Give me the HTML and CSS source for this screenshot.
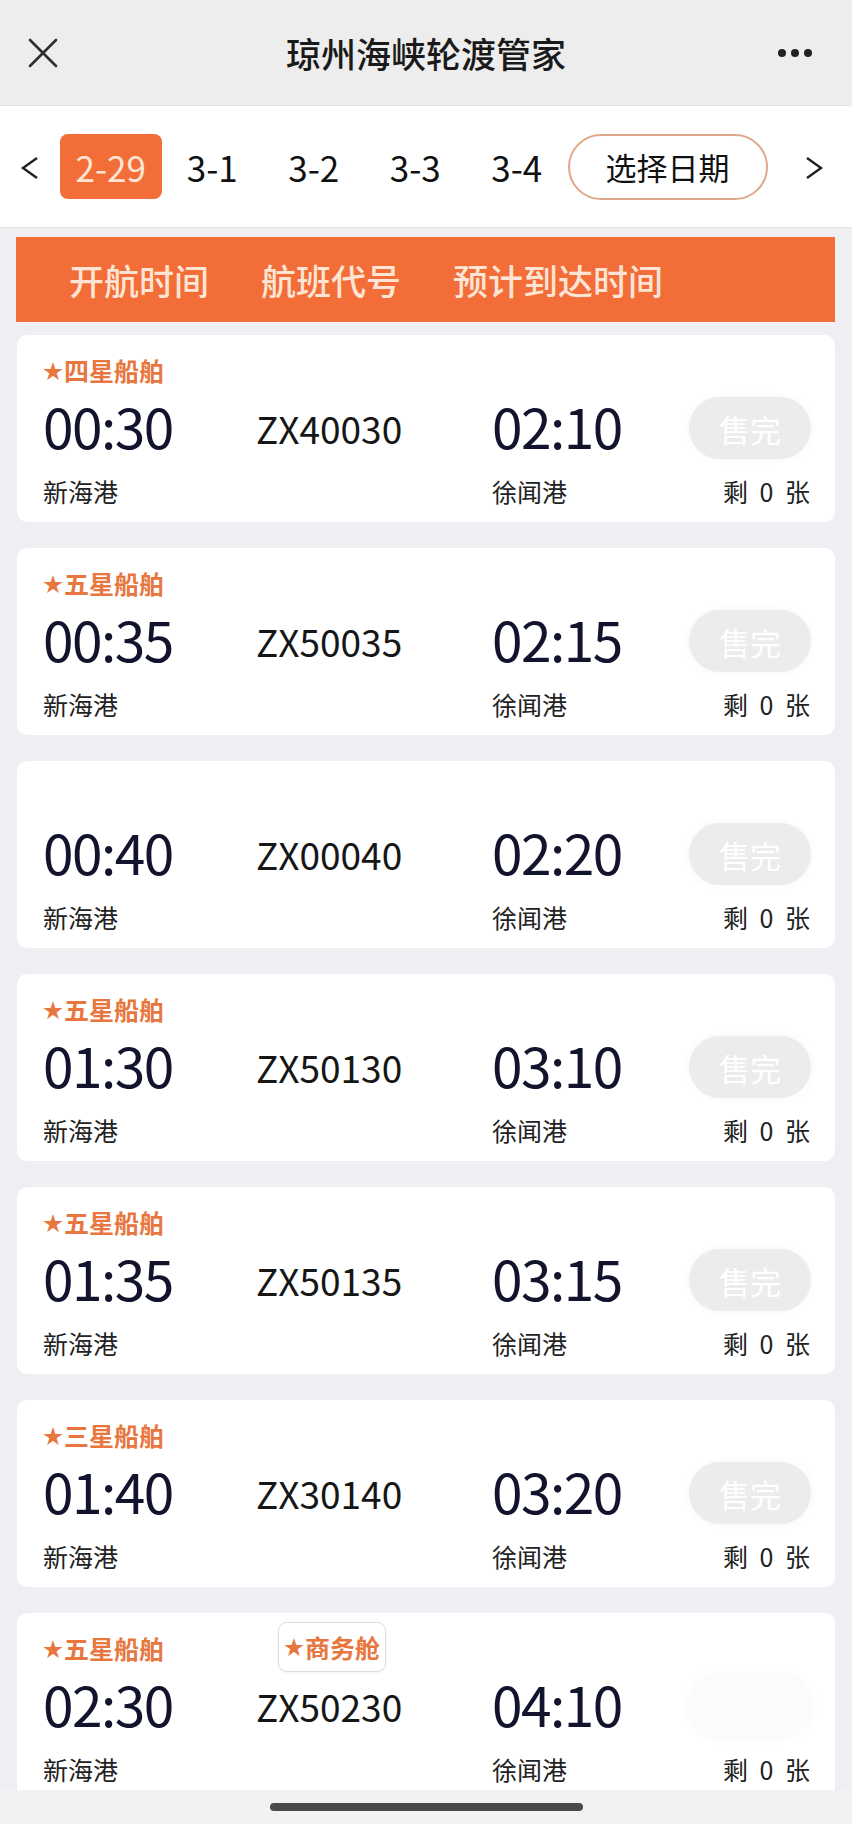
FILE: index.html
```html
<!DOCTYPE html>
<html lang="zh-CN">
<head>
  <meta charset="UTF-8">
  <meta name="viewport" content="width=device-width, initial-scale=1.0">
  <title>琼州海峡轮渡管家</title>
  <link rel="stylesheet" href="styles.css">
</head>
<body>
  <div class="page">
    <div class="topbar">
      <svg class="close-icon" width="30" height="30" viewBox="0 0 30 30">
        <path d="M2 2 L28 28 M28 2 L2 28" stroke="#2f2f2f" stroke-width="2.6" stroke-linecap="round" fill="none"/>
      </svg>
      <h1 class="title">琼州海峡轮渡管家</h1>
      <div class="more"><span></span><span></span><span></span></div>
    </div>

    <div class="datebar">
      <div class="arrow">
        <svg width="20" height="24" viewBox="0 0 20 24"><polyline points="17,2 3,12 17,22" fill="none" stroke="#222" stroke-width="2.4"/></svg>
      </div>
      <div class="date active">2-29</div>
      <div class="date">3-1</div>
      <div class="date">3-2</div>
      <div class="date">3-3</div>
      <div class="date">3-4</div>
      <div class="pick">选择日期</div>
      <div class="arrow arrow-right">
        <svg width="20" height="24" viewBox="0 0 20 24"><polyline points="3,2 17,12 3,22" fill="none" stroke="#222" stroke-width="2.4"/></svg>
      </div>
    </div>

    <div class="colhead">
      <span>开航时间</span>
      <span>航班代号</span>
      <span>预计到达时间</span>
    </div>

    <div class="trips">
      <div class="trip">
        <div class="tags"><span class="tag"><i>★</i>四星船舶</span></div>
        <div class="time">00:30</div>
        <div class="code">ZX40030</div>
        <div class="time">02:10</div>
        <div class="sold">售完</div>
        <div class="port from">新海港</div>
        <div class="port to">徐闻港</div>
        <div class="left">剩 0 张</div>
      </div>

      <div class="trip">
        <div class="tags"><span class="tag"><i>★</i>五星船舶</span></div>
        <div class="time">00:35</div>
        <div class="code">ZX50035</div>
        <div class="time">02:15</div>
        <div class="sold">售完</div>
        <div class="port from">新海港</div>
        <div class="port to">徐闻港</div>
        <div class="left">剩 0 张</div>
      </div>

      <div class="trip">
        <div class="tags"></div>
        <div class="time">00:40</div>
        <div class="code">ZX00040</div>
        <div class="time">02:20</div>
        <div class="sold">售完</div>
        <div class="port from">新海港</div>
        <div class="port to">徐闻港</div>
        <div class="left">剩 0 张</div>
      </div>

      <div class="trip">
        <div class="tags"><span class="tag"><i>★</i>五星船舶</span></div>
        <div class="time">01:30</div>
        <div class="code">ZX50130</div>
        <div class="time">03:10</div>
        <div class="sold">售完</div>
        <div class="port from">新海港</div>
        <div class="port to">徐闻港</div>
        <div class="left">剩 0 张</div>
      </div>

      <div class="trip">
        <div class="tags"><span class="tag"><i>★</i>五星船舶</span></div>
        <div class="time">01:35</div>
        <div class="code">ZX50135</div>
        <div class="time">03:15</div>
        <div class="sold">售完</div>
        <div class="port from">新海港</div>
        <div class="port to">徐闻港</div>
        <div class="left">剩 0 张</div>
      </div>

      <div class="trip">
        <div class="tags"><span class="tag"><i>★</i>三星船舶</span></div>
        <div class="time">01:40</div>
        <div class="code">ZX30140</div>
        <div class="time">03:20</div>
        <div class="sold">售完</div>
        <div class="port from">新海港</div>
        <div class="port to">徐闻港</div>
        <div class="left">剩 0 张</div>
      </div>

      <div class="trip">
        <div class="tags">
          <span class="tag"><i>★</i>五星船舶</span>
          <span class="tag cabin"><i>★</i>商务舱</span>
        </div>
        <div class="time">02:30</div>
        <div class="code">ZX50230</div>
        <div class="time">04:10</div>
        <div class="sold faded"></div>
        <div class="port from">新海港</div>
        <div class="port to">徐闻港</div>
        <div class="left">剩 0 张</div>
      </div>
    </div>

    <div class="homebar"><span></span></div>
  </div>
</body>
</html>
```

FILE: styles.css
```css
body {
  margin: 0;
  background-color: #efeff3;
  font-family: "Noto Sans CJK SC", "Noto Sans", sans-serif;
  color: #111;
}

.page {
  display: flex;
  flex-direction: column;
  height: 1824px;
  overflow: hidden;
}

/* top navigation */
.topbar {
  flex: none;
  height: 105px;
  background-color: #ededed;
  display: flex;
  align-items: center;
  padding: 0 40px 0 28px;
}

.close-icon {
  flex: none;
}

.title {
  flex: 1;
  margin: 0;
  text-align: center;
  font-size: 35px;
  font-weight: 500;
  color: #1a1a1a;
  padding-left: 16px;
}

.more {
  display: flex;
  gap: 5px;
}

.more span {
  width: 8px;
  height: 8px;
  border-radius: 50%;
  background-color: #222;
}

/* date selector */
.datebar {
  flex: none;
  height: 121px;
  background: white;
  border-top: 1px solid #e4e4e4;
  border-bottom: 1px solid #e4e4e4;
  display: flex;
  align-items: center;
}

.arrow {
  width: 60px;
  display: flex;
  justify-content: center;
  padding-top: 2px;
}

.arrow-right {
  width: auto;
  flex: 1;
  padding-left: 8px;
}

.date {
  width: 101.5px;
  height: 65px;
  display: flex;
  align-items: center;
  justify-content: center;
  font-size: 35px;
  color: #111;
  border-radius: 8px;
}

.date.active {
  background-color: #f26d37;
  color: #fde6d6;
}

.pick {
  width: 196px;
  height: 62px;
  border: 2px solid #dfa88a;
  border-radius: 33px;
  display: flex;
  align-items: center;
  justify-content: center;
  font-size: 31px;
  color: #111;
}

/* column header */
.colhead {
  flex: none;
  height: 85px;
  margin: 9px 17px 0 16px;
  background-color: #f26d37;
  display: flex;
  align-items: center;
  gap: 52px;
  padding-left: 53px;
  font-size: 35px;
  font-weight: 500;
  color: #fde4d4;
}

/* trips list */
.trips {
  flex: 1;
  overflow: hidden;
  padding: 13px 17px 0;
  display: flex;
  flex-direction: column;
  gap: 26px;
}

.trip {
  flex: none;
  height: 187px;
  background: white;
  border-radius: 10px;
  padding: 0 24px 0 26px;
  display: grid;
  grid-template-columns: 212px 237px 1fr 122px;
  grid-template-rows: 62px 62px 1fr;
  align-items: center;
}

.tags {
  grid-column: 1 / -1;
  align-self: stretch;
  display: grid;
  grid-template-columns: 212px 237px;
  align-items: center;
  padding-top: 8px;
}

.tag {
  font-size: 25px;
  font-weight: 700;
  color: #e8773f;
  line-height: 30px;
}

.tag i {
  font-style: normal;
  font-size: 20px;
  margin-right: 1px;
  vertical-align: 2px;
}

.tag.cabin {
  justify-self: start;
  margin-left: 23px;
  margin-top: -2px;
  height: 48px;
  padding: 0 5px;
  display: flex;
  align-items: center;
  border: 1px solid #dcdcdc;
  border-radius: 9px;
  box-shadow: 0 1px 3px rgba(0, 0, 0, 0.06);
}

.time {
  font-size: 55px;
  font-weight: 400;
  color: #12132c;
  line-height: 62px;
  letter-spacing: -1.5px;
  margin-bottom: 6px;
}

.code {
  font-size: 37px;
  color: #161616;
  line-height: 62px;
  padding-left: 1px;
}

.sold {
  height: 62px;
  border-radius: 31px;
  background-color: #ececec;
  color: white;
  font-size: 31px;
  display: flex;
  align-items: center;
  justify-content: center;
  box-shadow: 0 0 8px rgba(0, 0, 0, 0.04);
}

.sold.faded {
  background-color: #fbfbfb;
  box-shadow: 0 0 14px rgba(0, 0, 0, 0.035);
}

.port,
.left {
  align-self: start;
  margin-top: 20px;
  font-size: 25px;
  color: #222;
  line-height: 24px;
}

.port.from {
  grid-column: 1 / 3;
}

.port.to {
  grid-column: 3;
}

.left {
  grid-column: 4;
  text-align: right;
  word-spacing: 6px;
  padding-right: 1px;
}

/* home indicator */
.homebar {
  flex: none;
  height: 34px;
  background-color: #f2f2f2;
  display: flex;
  justify-content: center;
  align-items: center;
}

.homebar span {
  width: 313px;
  height: 8px;
  border-radius: 4px;
  background-color: #4a4a4a;
}
```
